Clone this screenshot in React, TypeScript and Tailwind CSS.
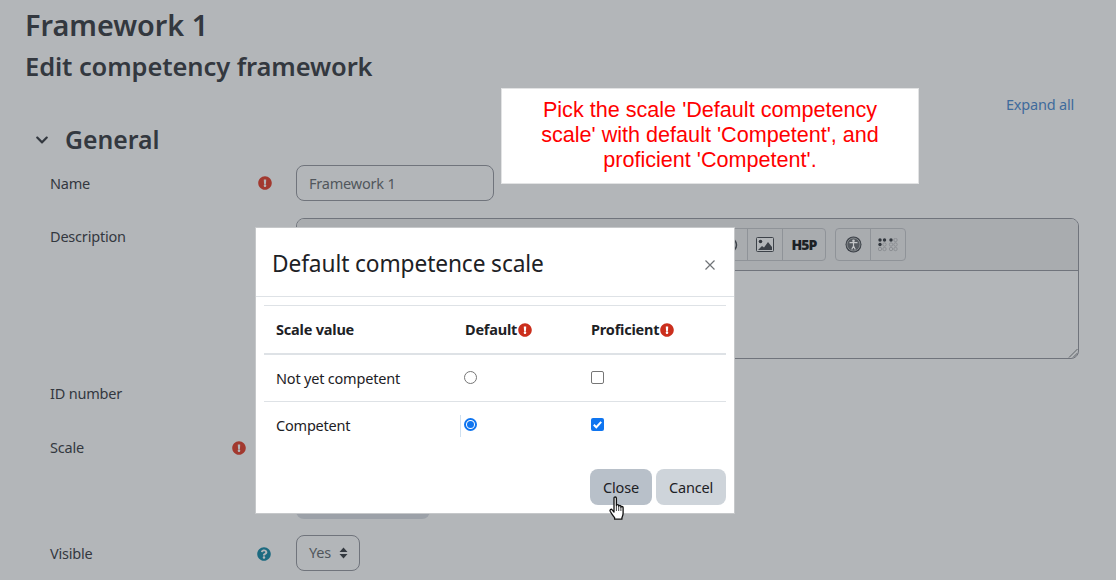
import { FaChevronDown, FaExclamationCircle, FaQuestionCircle } from "react-icons/fa";

const sans = "font-['Noto_Sans','Open_Sans',sans-serif]";

const FormRow = ({ label, icon, iconClass, height, children }: { label: string; icon?: React.ReactNode; iconClass?: string; height: string; children?: React.ReactNode }) => {
  return <div className={`flex items-start ${height}`}>
    <div className="w-[50px]"></div>
    <div className="w-[246px] flex items-start justify-between">
      <span className="text-[14.5px] leading-[37px] tracking-[-0.2px]">{label}</span>
      <span className={iconClass}>{icon}</span>
    </div>
    <div className="flex-1">{children}</div>
  </div>
}

const ToolCell = ({ children, last }: { children?: React.ReactNode; last?: boolean }) => {
  return <div className={`h-[31px] flex items-center justify-center ${last ? "w-[34px]" : "w-[35px] border-r border-[#8f9398]"}`}>{children}</div>
}

const Braille = () => {
  const dots: [number, number, boolean][] = [
    [2, 2, true], [6.5, 2, true], [2, 6.5, true], [6.5, 6.5, false], [2, 11, false], [6.5, 11, false],
    [13, 2, true], [17.5, 2, false], [13, 6.5, false], [17.5, 6.5, false], [13, 11, false], [17.5, 11, false],
  ];
  return <svg width="20" height="14" viewBox="0 0 20 14">
    {dots.map(([cx, cy, on], i) => (
      <circle key={i} cx={cx} cy={cy} r="1.700" fill={on ? "#33383f" : "none"} stroke={on ? "none" : "#86898e"} strokeWidth="0.800" />
    ))}
  </svg>
}

const ImageIcon = () => {
  return <svg width="18" height="15" viewBox="0 0 18 15">
    <rect x="0.500" y="0.500" width="17" height="14" rx="1" fill="#b3b6b9" stroke="#3d4249" />
    <circle cx="4.500" cy="4.500" r="1.800" fill="#33383f" />
    <path d="M2 13l4-4 2 1.500L12 5l4 5v3z" fill="#3d4249" />
  </svg>
}

const AccessIcon = () => {
  return <svg width="17" height="17" viewBox="0 0 17 17">
    <circle cx="8.500" cy="8.500" r="8" fill="#3d4249" />
    <circle cx="8.500" cy="8.500" r="6.500" fill="#555a60" stroke="#a9acaf" strokeWidth="0.600" />
    <circle cx="8.500" cy="4.800" r="1.300" fill="#c4c6c8" />
    <path d="M4.500 6.700h8M8.500 6.700v3.500M8.500 10l-1.800 3.500M8.500 10l1.800 3.500" stroke="#c4c6c8" strokeWidth="1.200" fill="none" />
  </svg>
}

const Cursor = () => {
  return <svg width="18" height="25" viewBox="0 0 18 25" className="absolute left-[608px] top-[496px]">
    <path d="M6 2.200c0-1.600 2.400-1.600 2.400 0v7.300c0-1.300 2.300-1.300 2.300 0v.8c0-1.200 2.200-1.200 2.200 0v.9c0-1.100 2.200-1.100 2.200 0.200v5.800c0 2-.6 3.200-1.200 4.600v1.400H6.600v-1.500c-1.200-1.700-3-3.800-4.400-6.500-.7-1.500 1-2.600 2-1.300l1.800 2.200z" fill="#fff" stroke="#111" strokeWidth="1.300" strokeLinejoin="round" />
    <path d="M8.400 10v5M10.700 10.500v4.500M12.900 11.200v3.800" stroke="#111" strokeWidth="0.800" />
  </svg>
}

const App = () => {
  return <div className={`relative w-[1116px] h-[580px] overflow-hidden bg-[#b3b6b9] text-[#33383f] ${sans}`}>
    <div className="pl-[25px] pt-[4px]">
      <h1 className="text-[28.8px] leading-[42px] font-semibold">Framework 1</h1>
      <h2 className="text-[25.5px] leading-[36px] mt-[2px] font-semibold tracking-[-0.1px]">Edit competency framework</h2>
    </div>
    <div className="flex justify-end pr-[42px] mt-[10px] h-[20px]">
      <span className="text-[14.5px] leading-[20px] text-[#3f6b9c] tracking-[-0.2px]">Expand all</span>
    </div>
    <div className="flex items-center pl-[35px] h-[36px] mt-[8px]">
      <FaChevronDown className="text-[14px] w-[14px]" />
      <span className="ml-[16px] text-[24.8px] font-semibold">General</span>
    </div>
    <div className="pr-[37px] mt-[7px]">
      <FormRow label="Name" height="h-[53px]" iconClass="pt-[11px] mr-[24px]" icon={<FaExclamationCircle className="text-[14px] text-[#a2392f]" />}>
        <div className="w-[198px] h-[36px] border border-[#70747c] rounded-[8px] px-[12px] text-[14.5px] leading-[34px] text-[#51565c] tracking-[-0.2px]">Framework 1</div>
      </FormRow>
      <FormRow label="Description" height="h-[157px]">
        <div className="relative h-[141px] border border-[#70747c] rounded-[8px] overflow-hidden">
          <div className="h-[52px] bg-[#a9acaf] border-b border-[#70747c] flex justify-end items-start pt-[9px] pr-[172px] gap-[9px]">
            <div className="flex border border-[#8f9398] rounded-[4px]">
              <ToolCell>
                <svg width="16" height="16" viewBox="0 0 16 16" className="text-[#3d4249]"><circle cx="8" cy="8" r="6.500" fill="none" stroke="currentColor" strokeWidth="1.500" /></svg>
              </ToolCell>
              <ToolCell><ImageIcon /></ToolCell>
              <div className="w-[42px] h-[31px] flex items-center justify-center text-[14px] font-black tracking-[-1px] text-[#1d2125]">H5P</div>
            </div>
            <div className="flex border border-[#8f9398] rounded-[4px]">
              <ToolCell><AccessIcon /></ToolCell>
              <ToolCell last><Braille /></ToolCell>
            </div>
          </div>
          <svg width="10" height="10" viewBox="0 0 10 10" className="absolute right-0 bottom-0">
            <path d="M1 9.500 9.500 1M5 9.500 9.500 5" stroke="#4a4e54" strokeWidth="0.800" />
          </svg>
        </div>
      </FormRow>
      <FormRow label="ID number" height="h-[54px]" />
      <FormRow label="Scale" height="h-[106px]" iconClass="pt-[12px] mr-[50px]" icon={<FaExclamationCircle className="text-[14px] text-[#a2392f]" />}>
        <div className="mt-[54px] w-[134px] h-[36px] bg-[#9ca1a8] rounded-[8px]"></div>
      </FormRow>
      <FormRow label="Visible" height="h-[36px]" iconClass="pt-[12px] mr-[25px]" icon={<FaQuestionCircle className="text-[14px] text-[#1c6a80]" />}>
        <div className="w-[64px] h-[36px] border border-[#70747c] rounded-[8px] pl-[12px] flex items-center gap-[8px] text-[14.5px] text-[#51565c] tracking-[-0.2px]">
          Yes
          <svg width="9" height="12" viewBox="0 0 9 12"><path d="M4.500 0.500 8.500 5H.5zM4.500 11.500.5 7h8z" fill="#33383f" /></svg>
        </div>
      </FormRow>
    </div>

    <div className="absolute left-[501px] top-[88px] w-[418px] h-[96px] bg-white border border-[#e2e3e4] pt-[8px] text-center text-[21.6px] leading-[25px] text-[#ff0000] font-['Liberation_Sans',sans-serif]">
      Pick the scale 'Default competency<br />scale' with default 'Competent', and<br />proficient 'Competent'.
    </div>

    <div className="absolute left-[255px] top-[227px] w-[480px] h-[287px] bg-white border border-[#c6c8ca] text-[#1d2125]">
      <div className="h-[69px] border-b border-[#dee2e6] flex items-center justify-between pl-[16px] pr-[19px]">
        <span className="text-[22.7px] tracking-[-0.1px] mt-[5px]">Default competence scale</span>
        <svg width="10" height="10" viewBox="0 0 10 10" className="mt-[6px]"><path d="M.5.5l9 9M9.500.5l-9 9" stroke="#6f7377" strokeWidth="1.200" /></svg>
      </div>
      <div className="px-[8px] pt-[8px]">
        <div className="border-t border-[#dee2e6]">
          <div className="h-[49px] flex items-center border-b-2 border-[#dee2e6] text-[14.5px] font-bold tracking-[-0.2px]">
            <span className="w-[201px] pl-[12px]">Scale value</span>
            <span className="w-[126px] flex items-center">Default<FaExclamationCircle className="ml-[1px] text-[14px] text-[#cb2f1d]" /></span>
            <span className="flex items-center">Proficient<FaExclamationCircle className="ml-[1px] text-[14px] text-[#cb2f1d]" /></span>
          </div>
          <div className="h-[47px] flex items-center border-b border-[#dee2e6] text-[14.5px] tracking-[-0.2px]">
            <span className="w-[201px] pl-[12px] mt-[2px]">Not yet competent</span>
            <span className="w-[126px]"><span className="block -ml-[1px] -mt-[2px] w-[13px] h-[13px] rounded-full border border-[#767676]"></span></span>
            <span className="block -mt-[2px] w-[13px] h-[13px] rounded-[2px] border border-[#767676]"></span>
          </div>
          <div className="h-[47px] flex items-center text-[14.5px] tracking-[-0.2px]">
            <span className="w-[196px] pl-[12px]">Competent</span>
            <span className="w-[131px] h-[22px] border-l border-[#cfe0f0] pl-[3px] flex items-center">
              <span className="-mt-[2px] w-[13px] h-[13px] rounded-full border-2 border-[#0f75f0] flex items-center justify-center"><span className="w-[7px] h-[7px] rounded-full bg-[#0f75f0]"></span></span>
            </span>
            <span className="-mt-[2px] w-[13px] h-[13px] rounded-[2px] bg-[#0f75f0] flex items-center justify-center">
              <svg width="11" height="11" viewBox="0 0 11 11"><path d="M1.800 5.700 4.300 8.200 9.200 2.800" fill="none" stroke="#fff" strokeWidth="2" /></svg>
            </span>
          </div>
        </div>
      </div>
      <div className="flex justify-end gap-[4px] pr-[8px] mt-[20px] text-[14.5px] tracking-[-0.2px]">
        <div className="w-[62px] h-[36px] pt-[1px] rounded-[8px] bg-[#b8c0c9] flex items-center justify-center">Close</div>
        <div className="w-[70px] h-[36px] pt-[1px] rounded-[8px] bg-[#ced4da] flex items-center justify-center">Cancel</div>
      </div>
    </div>
    <Cursor />
  </div>
}
export default App;
